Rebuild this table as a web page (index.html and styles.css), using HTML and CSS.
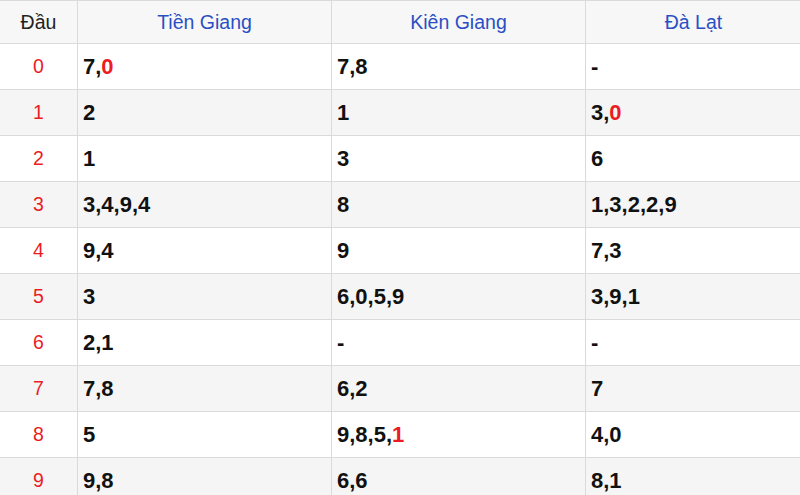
FILE: index.html
```html
<!DOCTYPE html>
<html lang="vi">
<head>
<meta charset="utf-8">
<title>Thống kê đầu</title>
<link rel="stylesheet" href="styles.css">
</head>
<body>
<table class="kq">
  <colgroup>
    <col class="c-dau">
    <col class="c-tinh">
    <col class="c-tinh">
    <col class="c-last">
  </colgroup>
  <thead>
    <tr>
      <th class="h-dau">Đầu</th>
      <th>Tiền Giang</th>
      <th>Kiên Giang</th>
      <th>Đà Lạt</th>
    </tr>
  </thead>
  <tbody>
    <tr><td class="dau">0</td><td>7,<span class="hl">0</span></td><td>7,8</td><td>-</td></tr>
    <tr><td class="dau">1</td><td>2</td><td>1</td><td>3,<span class="hl">0</span></td></tr>
    <tr><td class="dau">2</td><td>1</td><td>3</td><td>6</td></tr>
    <tr><td class="dau">3</td><td>3,4,9,4</td><td>8</td><td>1,3,2,2,9</td></tr>
    <tr><td class="dau">4</td><td>9,4</td><td>9</td><td>7,3</td></tr>
    <tr><td class="dau">5</td><td>3</td><td>6,0,5,9</td><td>3,9,1</td></tr>
    <tr><td class="dau">6</td><td>2,1</td><td>-</td><td>-</td></tr>
    <tr><td class="dau">7</td><td>7,8</td><td>6,2</td><td>7</td></tr>
    <tr><td class="dau">8</td><td>5</td><td>9,8,5,<span class="hl">1</span></td><td>4,0</td></tr>
    <tr><td class="dau">9</td><td>9,8</td><td>6,6</td><td>8,1</td></tr>
  </tbody>
</table>
</body>
</html>
```
FILE: styles.css
```css
html, body {
  margin: 0;
  padding: 0;
  background: #ffffff;
  overflow: hidden;
}

.kq {
  border-collapse: collapse;
  table-layout: fixed;
  width: 802px;
  margin-left: -1px;
  font-family: "Liberation Sans", Arial, sans-serif;
}

.c-dau { width: 78px; }
.c-tinh { width: 254px; }
.c-last { width: 216px; }

.kq th,
.kq td {
  border: 1px solid #dadada;
  padding: 0;
}

.kq th {
  height: 42px;
  background: #f7f7f7;
  font-weight: normal;
  font-size: 19.5px;
  color: #2a4fc4;
  text-align: center;
}

.kq th.h-dau {
  color: #222222;
}

.kq td {
  height: 45px;
  padding-left: 5px;
  font-size: 22px;
  font-weight: bold;
  color: #111111;
  text-align: left;
}

.kq tbody tr:nth-child(even) td {
  background: #f5f5f5;
}

.kq td.dau {
  padding-left: 0;
  text-align: center;
  font-weight: normal;
  font-size: 19.5px;
  color: #ec1c24;
}

.hl {
  color: #ec1c24;
}
```
